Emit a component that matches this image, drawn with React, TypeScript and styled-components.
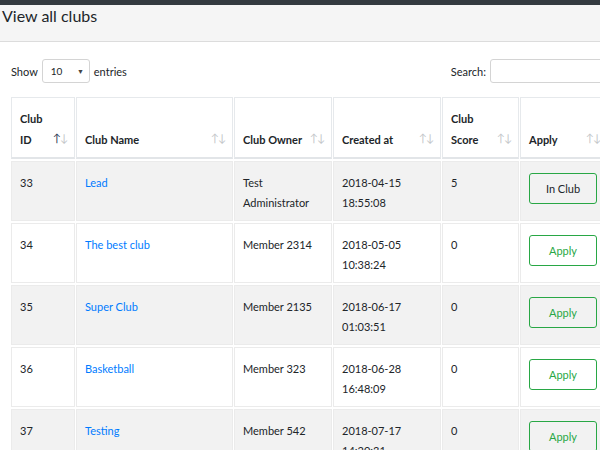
import React from "react";
import styled, { createGlobalStyle } from "styled-components";

const Global = createGlobalStyle`
  html, body { margin: 0; padding: 0; overflow: hidden; background: #fff; }
  body {
    font-family: Lato, "Noto Sans", sans-serif;
    color: #212529;
    width: 640px;
  }
`;

const TopBar = styled.div`
  height: 5px;
  background: #343a40;
`;

const TitleStrip = styled.header`
  height: 37px;
  box-sizing: border-box;
  background: #f5f5f5;
  border-bottom: 1px solid #dcdcdc;
  padding: 0 0 0 2px;
`;

const Title = styled.h1`
  margin: 0;
  font-size: 16px;
  font-weight: 400;
  line-height: 22px;
  color: #212529;
`;

const Content = styled.main`
  padding: 17px 0 0 11px;
`;

const Controls = styled.div`
  display: flex;
  align-items: center;
  justify-content: space-between;
  height: 24px;
  font-size: 11px;
  width: 609px;
`;

const Group = styled.label`
  display: flex;
  align-items: center;
  gap: 4px;
`;

const FakeSelect = styled.div`
  width: 48px;
  height: 24px;
  box-sizing: border-box;
  border: 1px solid #d4d4d4;
  border-radius: 3px;
  display: flex;
  align-items: center;
  justify-content: space-between;
  padding: 0 5px 0 8px;
  font-size: 10px;
  background: #fff;
`;

const Caret = styled.span`
  font-size: 7px;
  color: #444;
`;

const SearchBox = styled.div`
  width: 130px;
  height: 24px;
  box-sizing: border-box;
  border: 1px solid #d4d4d4;
  border-radius: 3px;
  background: #fff;
`;

const Table = styled.table`
  margin: 12px 0 0 -1px;
  border-collapse: separate;
  border-spacing: 1px 2px;
  table-layout: fixed;
  width: 599px;
  font-size: 11px;
`;

const Th = styled.th<{ $w: number }>`
  position: relative;
  width: ${(p) => p.$w}px;
  box-sizing: border-box;
  text-align: left;
  vertical-align: bottom;
  font-weight: 700;
  line-height: 21px;
  white-space: nowrap;
  padding: 10px 8px 7px 8px;
  border: 1px solid #e6e9ec;
  border-bottom: 2px solid #e2e5e8;
  background: #fff;
`;

const Sort = styled.span`
  position: absolute;
  right: 7px;
  bottom: 13px;
  font-size: 11px;
  font-weight: 400;
  letter-spacing: -1px;
  line-height: 12px;
`;

const Arrow = styled.span<{ $on?: boolean }>`
  color: ${(p) => (p.$on ? "#2c3a55" : "#c4c7ca")};
`;

const Tr = styled.tr<{ $odd: boolean }>`
  background: ${(p) => (p.$odd ? "#f2f2f2" : "#fff")};
`;

const Td = styled.td`
  vertical-align: top;
  padding: 11px 8px 7px 8px;
  line-height: 20px;
  height: 40px;
  border: 1px solid #ebebeb;
`;

const Link = styled.a`
  color: #007bff;
  text-decoration: none;
`;

const Btn = styled.button<{ $joined?: boolean }>`
  display: block;
  width: 68px;
  height: 31px;
  border: 1px solid #28a745;
  border-radius: 3px;
  background: transparent;
  font-family: Lato, "Noto Sans", sans-serif;
  font-size: 11px;
  color: ${(p) => (p.$joined ? "#212529" : "#28a745")};
  padding: 0;
`;

const cols: { label: React.ReactNode; w: number; on?: boolean }[] = [
  { label: <>Club<br />ID</>, w: 64, on: true },
  { label: "Club Name", w: 157 },
  { label: "Club Owner", w: 98 },
  { label: "Created at", w: 108 },
  { label: <>Club<br />Score</>, w: 77 },
  { label: "Apply", w: 88 },
];

const rows = [
  { id: 33, name: "Lead", owner: ["Test", "Administrator"], date: "2018-04-15", time: "18:55:08", score: 5, joined: true },
  { id: 34, name: "The best club", owner: ["Member 2314"], date: "2018-05-05", time: "10:38:24", score: 0 },
  { id: 35, name: "Super Club", owner: ["Member 2135"], date: "2018-06-17", time: "01:03:51", score: 0 },
  { id: 36, name: "Basketball", owner: ["Member 323"], date: "2018-06-28", time: "16:48:09", score: 0 },
  { id: 37, name: "Testing", owner: ["Member 542"], date: "2018-07-17", time: "14:20:31", score: 0 },
];

export default function App() {
  return (
    <>
      <Global />
      <TopBar />
      <TitleStrip>
        <Title>View all clubs</Title>
      </TitleStrip>
      <Content>
        <Controls>
          <Group>
            Show
            <FakeSelect>
              10 <Caret>▼</Caret>
            </FakeSelect>
            entries
          </Group>
          <Group>
            Search:
            <SearchBox />
          </Group>
        </Controls>
        <Table>
          <thead>
            <tr>
              {cols.map((c, i) => (
                <Th key={i} $w={c.w}>
                  {c.label}
                  <Sort>
                    <Arrow $on={c.on}>↑</Arrow>
                    <Arrow>↓</Arrow>
                  </Sort>
                </Th>
              ))}
            </tr>
          </thead>
          <tbody>
            {rows.map((r, i) => (
              <Tr key={r.id} $odd={i % 2 === 0}>
                <Td>{r.id}</Td>
                <Td>
                  <Link href="#">{r.name}</Link>
                </Td>
                <Td>
                  {r.owner.map((l, k) => (
                    <div key={k}>{l}</div>
                  ))}
                </Td>
                <Td>
                  <div>{r.date}</div>
                  <div>{r.time}</div>
                </Td>
                <Td>{r.score}</Td>
                <Td>
                  <Btn $joined={r.joined}>{r.joined ? "In Club" : "Apply"}</Btn>
                </Td>
              </Tr>
            ))}
          </tbody>
        </Table>
      </Content>
    </>
  );
}
